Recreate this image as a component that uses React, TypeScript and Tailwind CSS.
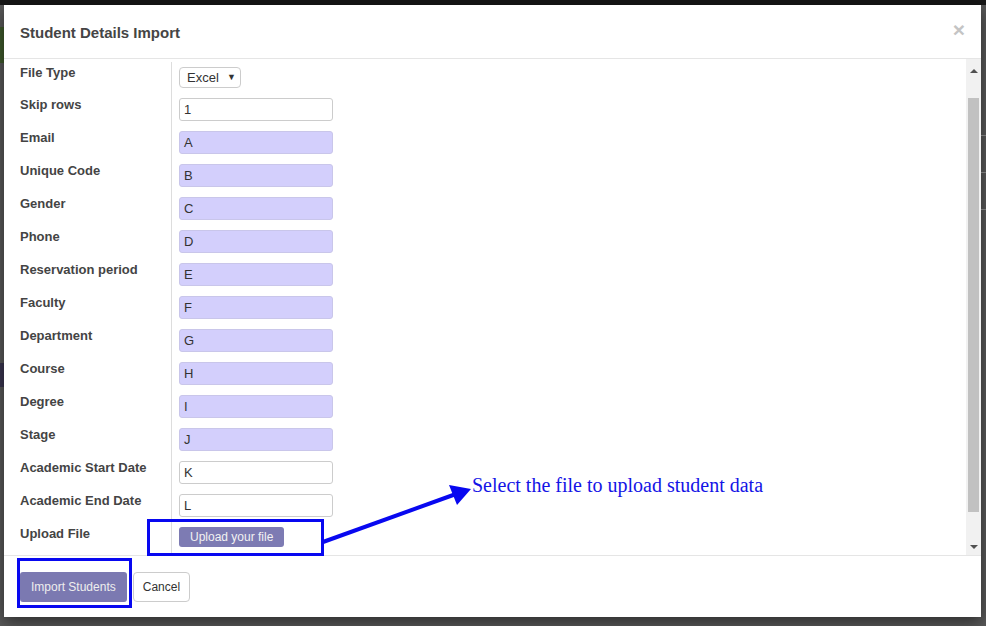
const fields = [
  { label: "Skip rows", value: "1", tint: false },
  { label: "Email", value: "A", tint: true },
  { label: "Unique Code", value: "B", tint: true },
  { label: "Gender", value: "C", tint: true },
  { label: "Phone", value: "D", tint: true },
  { label: "Reservation period", value: "E", tint: true },
  { label: "Faculty", value: "F", tint: true },
  { label: "Department", value: "G", tint: true },
  { label: "Course", value: "H", tint: true },
  { label: "Degree", value: "I", tint: true },
  { label: "Stage", value: "J", tint: true },
  { label: "Academic Start Date", value: "K", tint: false },
  { label: "Academic End Date", value: "L", tint: false },
];

const App = () => {
  return (
    <div
      className="relative w-[986px] h-[626px] overflow-hidden bg-[#595959] flex flex-col"
      style={{ fontFamily: '"Liberation Sans", Arial, sans-serif' }}
    >
      {/* page behind the backdrop */}
      <div className="h-[5px] bg-[#161616] shrink-0" />

      <div className="flex">
        <div className="w-[4px] flex flex-col shrink-0">
          <div className="h-[22px]" />
          <div className="h-[36px] bg-[#3f5a2c]" />
          <div className="h-[300px]" />
          <div className="h-[24px] bg-[#3a3550]" />
        </div>

        {/* Modal */}
        <div className="w-[977px] h-[612px] bg-white flex flex-col shadow-[0_5px_15px_rgba(0,0,0,0.5)]">
          {/* Header */}
          <div className="h-[54px] border-b border-[#e5e5e5] flex items-center justify-between pl-[16px] pr-[16px] pt-[3px] shrink-0">
            <h4 className="text-[15px] font-bold text-[#454545]">Student Details Import</h4>
            <span className="text-[21px] font-bold leading-none text-[#c4c4c4] -mt-[8px]">×</span>
          </div>

          {/* Body */}
          <div className="h-[496px] flex shrink-0">
            <div className="flex-1 overflow-hidden pt-[3px]">
              <div className="grid grid-cols-[168px_1fr]">
                <div className="h-[33px] pl-[16px] pt-[2px] border-r border-[#dddddd] text-[13px] leading-[18px] font-bold text-[#444]">
                  File Type
                </div>
                <div className="h-[33px] pl-[7px] pt-[5px]">
                  <div className="w-[62px] h-[21px] border border-[#cccccc] rounded-[4px] flex items-center pl-[7px] pr-[4px] justify-between text-[13px] text-[#333]">
                    <span>Excel</span>
                    <span className="text-[9px]">▼</span>
                  </div>
                </div>

                {fields.map((f) => (
                  <div key={f.label} className="contents">
                    <div className="h-[33px] pl-[16px] pt-[1px] border-r border-[#dddddd] text-[13px] leading-[18px] font-bold text-[#444]">
                      {f.label}
                    </div>
                    <div className="h-[33px] pl-[7px] pt-[3px]">
                      <div
                        className={`w-[154px] h-[23px] border rounded-[3px] flex items-center pl-[4px] text-[13px] text-[#333] ${
                          f.tint ? "bg-[#d3cffc] border-[#c9c6ea]" : "bg-white border-[#cccccc]"
                        }`}
                      >
                        {f.value}
                      </div>
                    </div>
                  </div>
                ))}

                <div className="h-[40px] pl-[16px] pt-[1px] border-r border-[#dddddd] text-[13px] leading-[18px] font-bold text-[#444]">
                  Upload File
                </div>
                <div className="h-[40px] pl-[7px] pt-[3px] flex items-start">
                  <button className="h-[20px] px-[11px] rounded-[3px] bg-[#7d7bb3] text-[12px] text-[#f2f2f2] leading-none flex items-center">
                    Upload your file
                  </button>
                </div>
              </div>
            </div>

            {/* Scrollbar */}
            <div className="w-[15px] bg-[#f1f1f1] flex flex-col items-center shrink-0">
              <div className="h-[14px] flex items-end justify-center">
                <div className="w-0 h-0 border-l-[4px] border-r-[4px] border-b-[4px] border-l-transparent border-r-transparent border-b-[#505050]" />
              </div>
              <div className="h-[25px]" />
              <div className="w-[11px] h-[414px] bg-[#c1c1c1]" />
              <div className="flex-1 flex items-end justify-center pb-[6px]">
                <div className="w-0 h-0 border-l-[4px] border-r-[4px] border-t-[4px] border-l-transparent border-r-transparent border-t-[#505050]" />
              </div>
            </div>
          </div>

          {/* Footer */}
          <div className="flex-1 border-t border-[#e5e5e5] pt-[16px] pl-[16px] flex items-start gap-[6px]">
            <button className="h-[30px] px-[11px] rounded-[3px] bg-[#7b79b1] text-[12px] text-[#eeeeee]">
              Import Students
            </button>
            <button className="h-[30px] px-[9px] rounded-[4px] border border-[#cccccc] bg-white text-[12px] text-[#333]">
              Cancel
            </button>
          </div>
        </div>

        <div className="w-[5px] flex flex-col shrink-0">
          <div className="h-[130px]" />
          <div className="h-px bg-[#777]" />
          <div className="h-[36px]" />
          <div className="h-px bg-[#777]" />
          <div className="h-[36px]" />
          <div className="h-px bg-[#777]" />
        </div>
      </div>

      {/* Annotations */}
      <div className="absolute left-[17px] top-[558px] w-[115px] h-[50px] border-[3px] border-[#0808f0]" />
      <div className="absolute left-[147px] top-[519px] w-[177px] h-[37px] border-[3px] border-[#0808f0]" />
      <svg className="absolute left-0 top-0" width="986" height="626">
        <line x1="323" y1="542" x2="456" y2="494" stroke="#0808f0" strokeWidth="4" />
        <polygon points="471,489 449,485 457,505" fill="#0808f0" />
      </svg>
      <div
        className="absolute left-[472px] top-[474px] text-[20px] leading-[23px] text-[#1414e6] whitespace-nowrap"
        style={{ fontFamily: '"Liberation Serif", "Times New Roman", serif' }}
      >
        Select the file to upload student data
      </div>
    </div>
  );
};

export default App;
